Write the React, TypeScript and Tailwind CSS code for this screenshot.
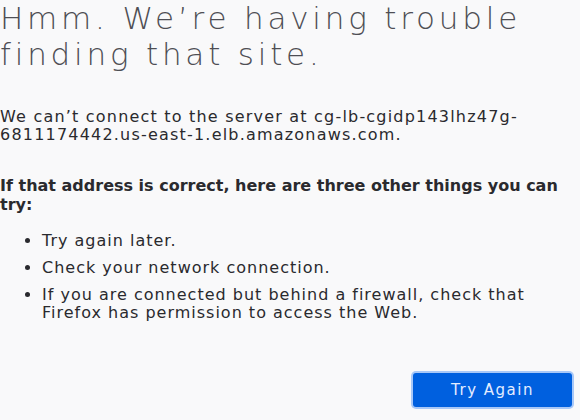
export default function App() {
  return (
    <div className="h-[420px] w-[580px] overflow-hidden bg-[#f9f9fa] font-['DejaVu_Sans',sans-serif] text-[#2a2a2e]">
      <h1 className="w-[560px] text-[31px] font-extralight leading-[36px] tracking-[3.8px] text-[#4e4e54]">
        Hmm. We’re having trouble finding that site.
      </h1>
      <p className="mt-[36px] w-[540px] text-[16px] leading-[18px] tracking-[1.2px]">
        We can’t connect to the server at cg-lb-cgidp143lhz47g-6811174442.us-east-1.elb.amazonaws.com.
      </p>
      <p className="mt-[32px] w-[575px] text-[16px] font-bold leading-[19px]">
        If that address is correct, here are three other things you can try:
      </p>
      <ul className="mt-[18px] flex w-[540px] list-disc flex-col gap-[9px] pl-[42px] text-[16px] leading-[18px] tracking-[1px]">
        <li>Try again later.</li>
        <li>Check your network connection.</li>
        <li>If you are connected but behind a firewall, check that Firefox has permission to access the Web.</li>
      </ul>
      <div className="mt-[51px] flex justify-end pr-[8px]">
        <button className="h-[34px] w-[159px] rounded-[3px] bg-[#0060df] text-[15px] tracking-[1.5px] text-[#e3ecff] ring-2 ring-[#a8c8f8]">
          Try Again
        </button>
      </div>
    </div>
  );
}
